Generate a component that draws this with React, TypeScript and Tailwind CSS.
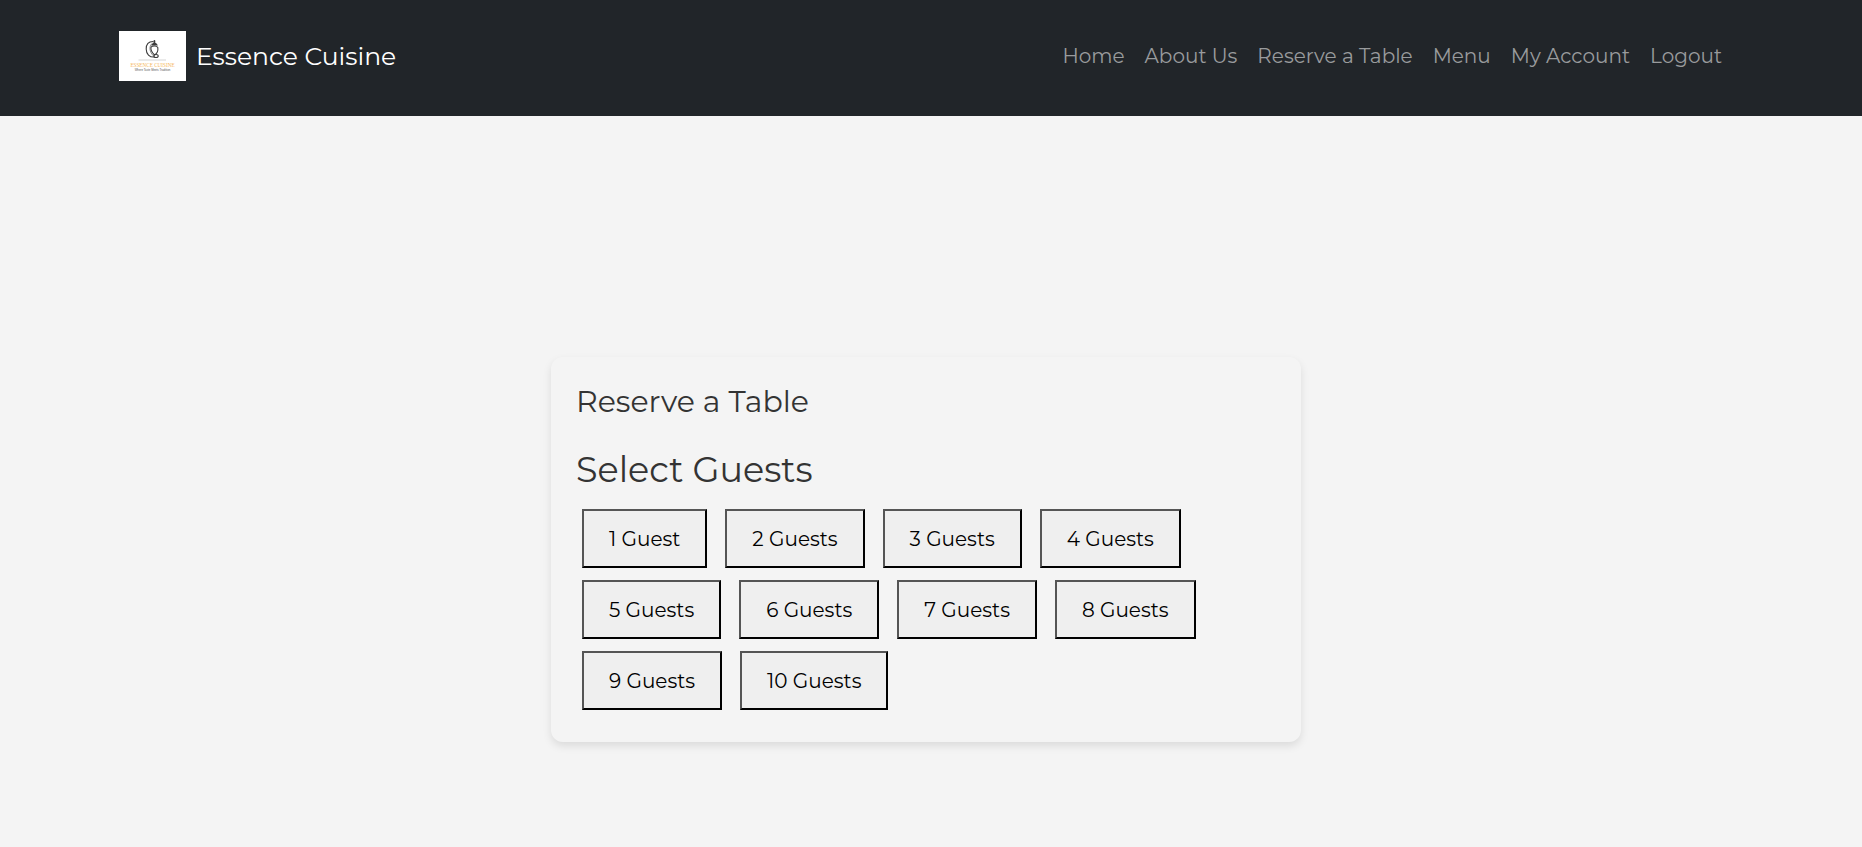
const links = ['Home', 'About Us', 'Reserve a Table', 'Menu', 'My Account', 'Logout'];
const guestCounts = [1, 2, 3, 4, 5, 6, 7, 8, 9, 10];

function Logo() {
  return (
    <svg viewBox="0 0 67 50" className="h-[50px] w-[67px] shrink-0 bg-white" role="img" aria-label="Essence Cuisine logo">
      <g fill="none" stroke="#3d3d3d" strokeWidth="1.1" strokeLinecap="round">
        <path d="M34 10.5C29 10.5 27.2 14 27.2 18C27.2 23 30.5 26.4 35.5 26" />
        <path d="M33 12.5C30.4 14 29.6 20 34 24.5" strokeWidth="0.6" />
        <path d="M32 16.2C33.5 14.6 37.8 14.6 38.8 16.6C39.3 20 37.8 22.6 35.6 24C33.4 22 31.3 19.5 32 16.2Z" />
        <path d="M33 14C34 11.8 37 11.8 38 14Z" fill="#3d3d3d" />
        <path d="M35.4 10V12" strokeWidth="1.8" />
        <ellipse cx="37" cy="25" rx="2.2" ry="1.5" />
      </g>
      <path d="M19.5 29H47" stroke="#c9c9c9" strokeWidth="0.8" />
      <text x="33.5" y="35.6" textAnchor="middle" fontSize="5.2" fill="#f6b75c" fontFamily="Liberation Serif, serif">
        ESSENCE CUISINE
      </text>
      <text x="33.5" y="40" textAnchor="middle" fontSize="2.8" fill="#555" fontFamily="Liberation Sans, sans-serif">
        Where Taste Meets Tradition
      </text>
    </svg>
  );
}

export default function App() {
  return (
    <div className="min-h-screen bg-[#f4f4f4] font-[Montserrat,Inter,sans-serif] text-[#333]">
      <header className="bg-[#212529] pt-[31px] pb-[35px] pr-[140px] pl-[119px]">
        <nav className="flex items-center justify-between">
          <a href="#" className="flex items-center gap-2.5 text-[25px] leading-8 text-white">
            <Logo />
            Essence Cuisine
          </a>
          <ul className="flex gap-5 text-[20px] leading-8 text-[#999b9d]">
            {links.map((label) => (
              <li key={label}>
                <a href="#">{label}</a>
              </li>
            ))}
          </ul>
        </nav>
      </header>
      <main className="flex justify-center pt-[241px] pr-2.5">
        <section className="w-full max-w-[750px] rounded-xl p-[25px] shadow-[0_4px_8px_rgba(0,0,0,0.1)]">
          <h1 className="text-[30px] leading-10">Reserve a Table</h1>
          <h2 className="mt-[26px] text-[35px] leading-11">Select Guests</h2>
          <div className="mt-[17px] mb-[7px] ml-1.5 flex flex-wrap gap-x-[18px] gap-y-3">
            {guestCounts.map((count) => (
              <button
                key={count}
                type="button"
                className="h-[59px] border-2 border-t-[#555] border-r-black border-b-black border-l-[#555] bg-[#efefef] px-[25px] text-[20px] text-black"
              >
                {count} {count === 1 ? 'Guest' : 'Guests'}
              </button>
            ))}
          </div>
        </section>
      </main>
    </div>
  );
}
